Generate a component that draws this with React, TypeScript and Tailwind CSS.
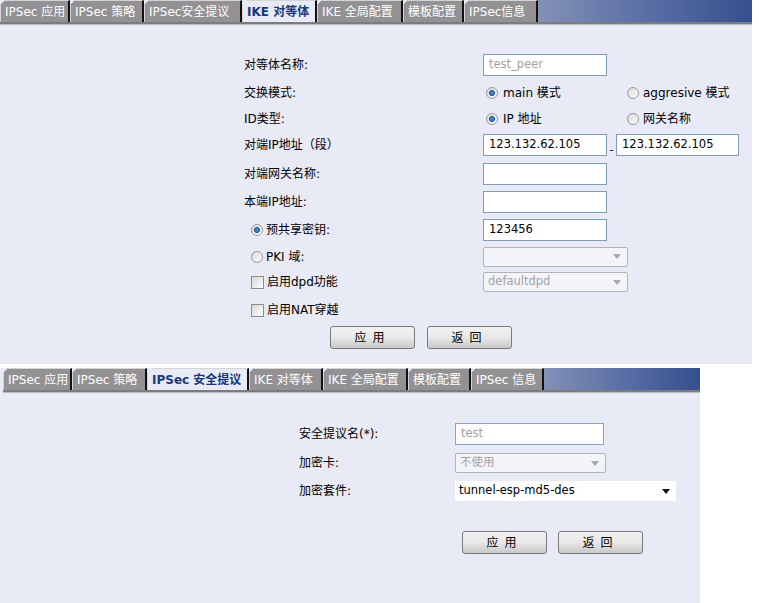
import React from 'react';

const FONT = '"DejaVu Sans", "Noto Sans CJK SC", sans-serif';

type TabDef = { label: string; w: number };

const TABS: TabDef[] = [
  { label: 'IPSec 应用', w: 70 },
  { label: 'IPSec 策略', w: 74 },
  { label: 'IPSec安全提议', w: 98 },
  { label: 'IKE 对等体', w: 75 },
  { label: 'IKE 全局配置', w: 86 },
  { label: '模板配置', w: 61 },
  { label: 'IPSec信息', w: 74 },
];

const TABS_B: TabDef[] = [
  { label: 'IPSec 应用', w: 69 },
  { label: 'IPSec 策略', w: 75 },
  { label: 'IPSec 安全提议', w: 102 },
  { label: 'IKE 对等体', w: 74 },
  { label: 'IKE 全局配置', w: 85 },
  { label: '模板配置', w: 63 },
  { label: 'IPSec 信息', w: 73 },
];

function TabBar({ tabs, active, fill }: { tabs: TabDef[]; active: number; fill: number }) {
  return (
    <div>
      <div className="flex h-[22px]">
        {tabs.map((t, i) => (
          <div
            key={t.label}
            style={{ width: t.w }}
            className={
              'flex h-full shrink-0 items-center border-l border-t border-r-2 border-l-[#d4d4d4] border-t-[#d4d4d4] border-r-[#111111] pl-[4px] text-[12px] whitespace-nowrap [clip-path:polygon(5px_0,100%_0,100%_100%,0_100%,0_5px)] ' +
              (i === active ? 'bg-[#e8eaf5] font-bold text-[#17397a]' : 'bg-[#939194] text-white')
            }
          >
            {t.label}
          </div>
        ))}
        <div
          style={{ width: fill }}
          className="h-full shrink-0 bg-gradient-to-r from-[#8291b6] via-[#5b6fa6] to-[#34508d]"
        />
      </div>
      <div className="h-[2px] bg-[#7c7c7c]" />
      <div className="h-[1px] bg-[#bcbcbc]" />
    </div>
  );
}

function Radio({ on }: { on?: boolean }) {
  return (
    <span className="flex h-[12px] w-[12px] shrink-0 items-center justify-center rounded-full border border-[#9a9a9a] bg-gradient-to-br from-[#d8d8d8] to-[#ffffff]">
      {on && <span className="h-[6px] w-[6px] rounded-full border border-[#0c3f86] bg-[#3c8be0]" />}
    </span>
  );
}

function Check() {
  return <span className="h-[13px] w-[13px] shrink-0 border border-[#8c8c8c] bg-gradient-to-br from-[#d6d6d6] to-[#ffffff]" />;
}

function Input({ w, value, dim, blue }: { w: number; value?: string; dim?: boolean; blue?: boolean }) {
  return (
    <div
      style={{ width: w }}
      className={
        'flex h-[22px] shrink-0 items-center border bg-white pl-[5px] text-[11.5px] ' +
        (blue ? 'border-[#7ea6d2] ' : 'border-[#7f9db9] ') +
        (dim ? 'text-[#a3a3a3]' : 'text-black')
      }
    >
      {value}
    </div>
  );
}

function Select({ w, value, disabled }: { w: number; value?: string; disabled?: boolean }) {
  return (
    <div
      style={{ width: w }}
      className={
        'flex h-[20px] shrink-0 items-center justify-between pl-[4px] pr-[6px] text-[11.5px] ' +
        (disabled
          ? 'rounded-[2px] border border-[#b3b3b3] bg-[#f3f4f9] text-[#a3a3a3]'
          : 'bg-white text-black')
      }
    >
      <span>{value}</span>
      <svg width="8" height="5" viewBox="0 0 8 5">
        <path d="M0 0h8L4 5z" fill={disabled ? '#a8a8a8' : '#111'} />
      </svg>
    </div>
  );
}

function Button({ label }: { label: string }) {
  return (
    <button className="flex h-[23px] w-[85px] items-center justify-center rounded-[3px] border border-[#7a7a7a] bg-gradient-to-b from-[#f2f2f2] via-[#e8e8e8] to-[#c9c9c9] text-[12px] tracking-[6px] text-black">
      {label}
    </button>
  );
}

function Row({ h, children }: { h: number; children: React.ReactNode }) {
  return (
    <div style={{ height: h }} className="flex items-center">
      {children}
    </div>
  );
}

function Label({ children, w }: { children: React.ReactNode; w: number }) {
  return (
    <div style={{ width: w }} className="flex shrink-0 items-center gap-[3px] text-[12px] text-black">
      {children}
    </div>
  );
}

function RadioPair({ a, b, on }: { a: string; b: string; on: 'a' | 'b' }) {
  return (
    <div className="flex items-center text-[12px] text-black">
      <div className="flex w-[144px] items-center gap-[5px] pl-[3px]">
        <Radio on={on === 'a'} />
        <span>{a}</span>
      </div>
      <div className="flex items-center gap-[4px]">
        <Radio on={on === 'b'} />
        <span>{b}</span>
      </div>
    </div>
  );
}

function PeerPanel() {
  return (
    <div className="h-[364px] w-[752px] bg-[#e8eaf5]">
      <TabBar tabs={TABS} active={3} fill={214} />
      <div className="pt-[26px] pl-[244px]">
        <Row h={28}>
          <Label w={239}>对等体名称:</Label>
          <Input w={124} value="test_peer" dim />
        </Row>
        <Row h={27}>
          <Label w={239}>交换模式:</Label>
          <RadioPair a="main 模式" b="aggresive 模式" on="a" />
        </Row>
        <Row h={26}>
          <Label w={239}>ID类型:</Label>
          <RadioPair a="IP 地址" b="网关名称" on="a" />
        </Row>
        <Row h={26}>
          <Label w={239}>对端IP地址（段）</Label>
          <Input w={124} value="123.132.62.105" />
          <span className="w-[9px] self-end pb-[3px] text-center text-[11px] leading-none">-</span>
          <Input w={123} value="123.132.62.105" />
        </Row>
        <Row h={32}>
          <Label w={239}>对端网关名称:</Label>
          <Input w={124} />
        </Row>
        <Row h={24}>
          <Label w={239}>本端IP地址:</Label>
          <Input w={124} />
        </Row>
        <Row h={32}>
          <Label w={239}>
            <span className="ml-[4px]" />
            <Radio on />
            <span>预共享密钥:</span>
          </Label>
          <Input w={124} value="123456" />
        </Row>
        <Row h={21}>
          <Label w={239}>
            <span className="ml-[4px]" />
            <Radio />
            <span>PKI 域:</span>
          </Label>
          <Select w={145} disabled />
        </Row>
        <Row h={30}>
          <Label w={239}>
            <span className="ml-[4px]" />
            <Check />
            <span>启用dpd功能</span>
          </Label>
          <Select w={145} value="defaultdpd" disabled />
        </Row>
        <Row h={26}>
          <Label w={239}>
            <span className="ml-[4px]" />
            <Check />
            <span>启用NAT穿越</span>
          </Label>
        </Row>
      </div>
      <div className="mt-[3px] flex gap-[12px] pl-[330px]">
        <Button label="应用" />
        <Button label="返回" />
      </div>
    </div>
  );
}

function ProposalPanel() {
  return (
    <div className="h-[235px] w-[700px] bg-[#e8eaf5] pl-[3px]">
      <TabBar tabs={TABS_B} active={2} fill={156} />
      <div className="pt-[27px] pl-[296px]">
        <Row h={28}>
          <Label w={156}>安全提议名(*):</Label>
          <Input w={149} value="test" dim blue />
        </Row>
        <Row h={30}>
          <Label w={156}>加密卡:</Label>
          <Select w={151} value="不使用" disabled />
        </Row>
        <Row h={26}>
          <Label w={156}>加密套件:</Label>
          <Select w={221} value="tunnel-esp-md5-des" />
        </Row>
      </div>
      <div className="mt-[27px] flex gap-[11px] pl-[459px]">
        <Button label="应用" />
        <Button label="返回" />
      </div>
    </div>
  );
}

export default function App() {
  return (
    <div className="h-[603px] w-[759px] overflow-hidden bg-white" style={{ fontFamily: FONT }}>
      <PeerPanel />
      <div className="h-[4px]" />
      <ProposalPanel />
    </div>
  );
}
